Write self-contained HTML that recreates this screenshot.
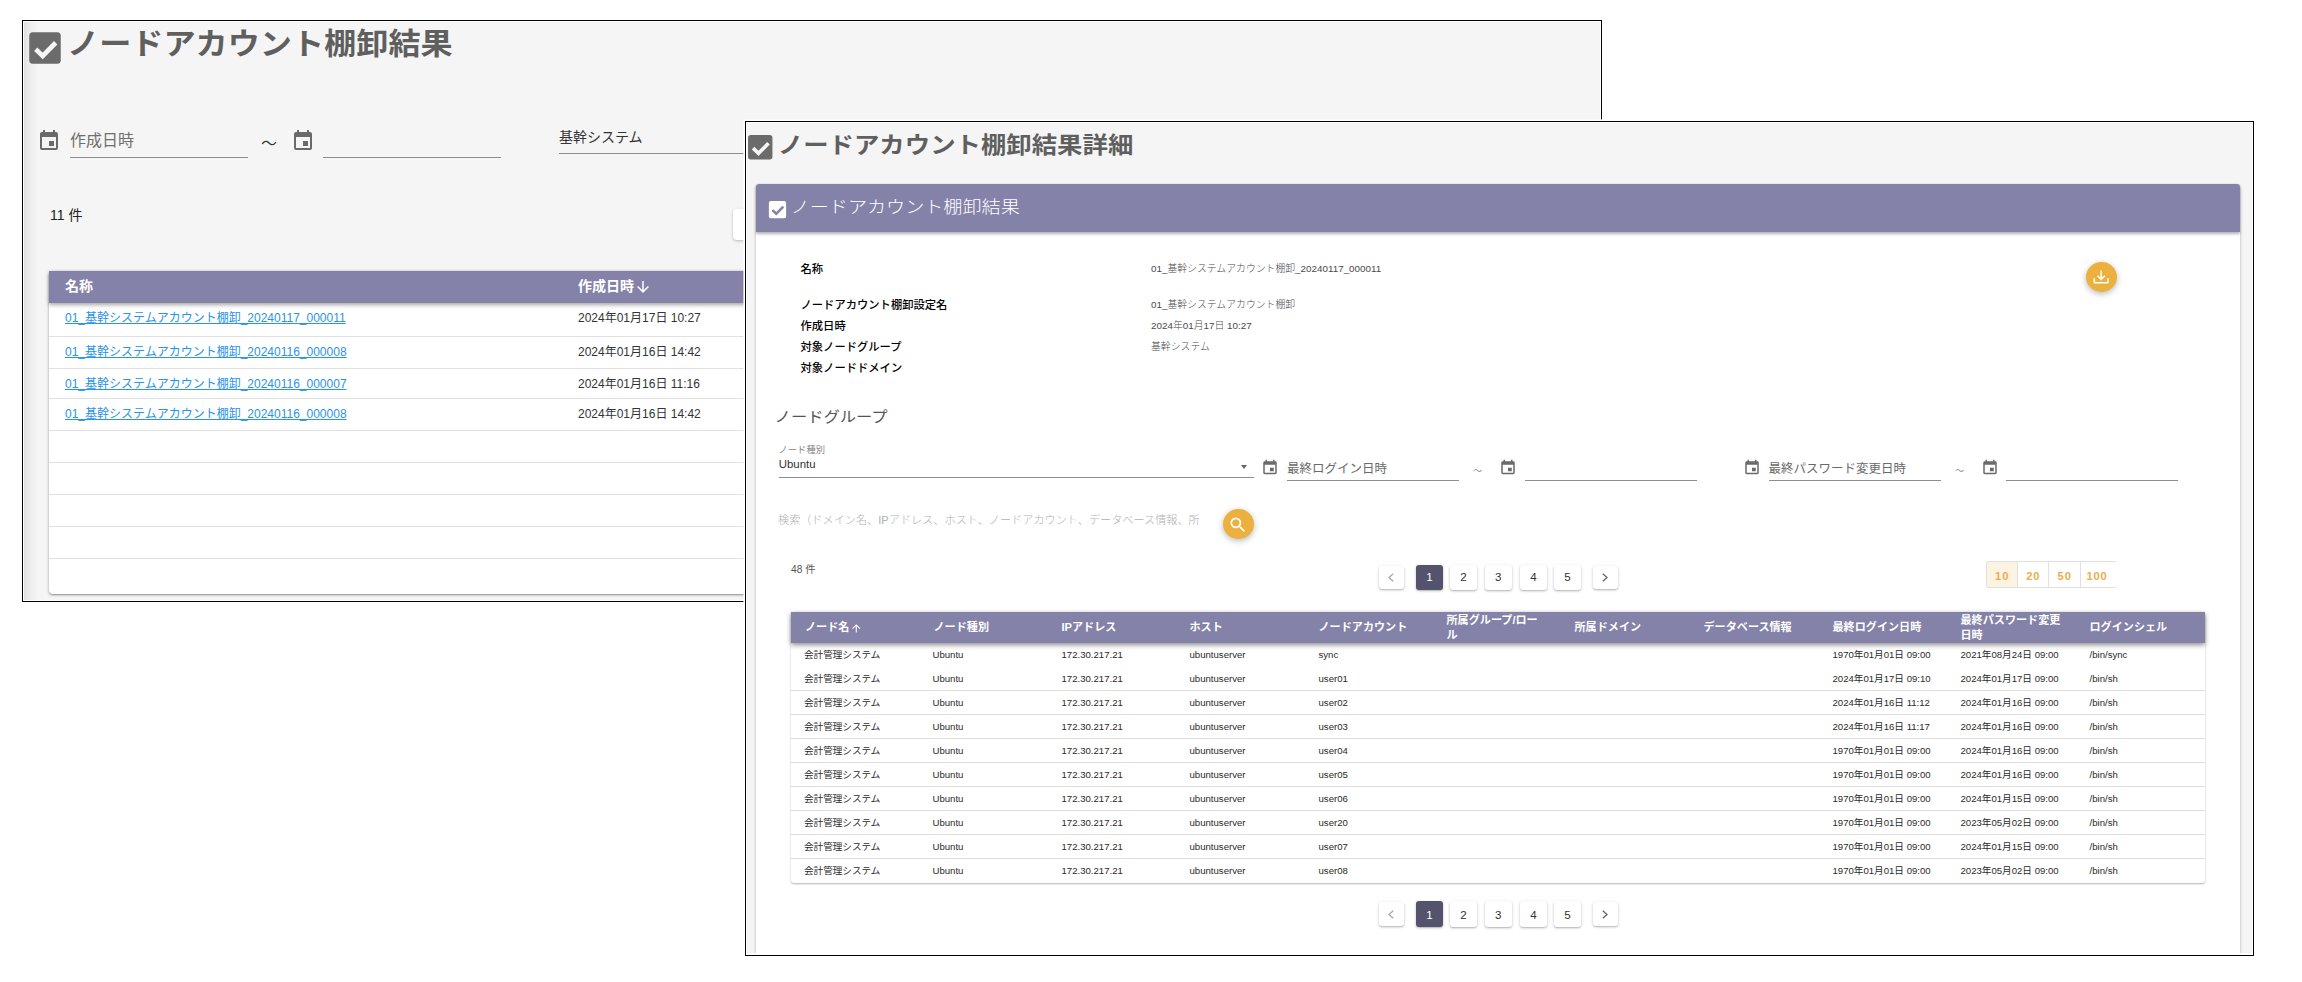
<!DOCTYPE html><html lang="ja"><head><meta charset="utf-8"><title>ノードアカウント棚卸結果</title><style>
*{box-sizing:border-box;margin:0;padding:0}
html,body{width:2302px;height:982px;background:#fff;overflow:hidden}
body{position:relative;font-family:"Liberation Sans","Noto Sans CJK JP",sans-serif;color:#222}
.a{position:absolute}
.t{position:absolute;white-space:nowrap;line-height:20px;height:20px;margin-top:-10px}
.f1{position:absolute;left:22px;top:20px;width:1580px;height:582px;border:1px solid #000;background:#f5f5f5;overflow:hidden;box-shadow:inset 0 0 0 1px #fff}
.f2{position:absolute;left:745px;top:121px;width:1509px;height:835px;border:1px solid #000;background:#f5f5f5;overflow:hidden;box-shadow:0 0 0 1px #fff,0 0 0 2px rgba(255,255,255,.6),inset 0 0 0 1px #fff}
.hd{background:#8482a8}
.ul{position:absolute;height:1px;background:#8e8e8e}
.pg{position:absolute;background:#fff;border-radius:3px;box-shadow:0 1px 3px rgba(0,0,0,.24),0 1px 1px rgba(0,0,0,.1);font-size:11.6px;text-align:center;color:#333}
.pg.on{background:#54536e;color:#fff}
.dv{position:absolute;height:1px;background:#e0e0e0}
</style></head><body>
<div class="f1">
<div class="a" style="left:1px;top:1px;width:16px;height:578px;background:linear-gradient(90deg,#e0e0e0,#e9e9e9 25%,#f0f0f0 55%,#f5f5f5)"></div>
<svg class="a" style="left:0.6px;top:5.5px" width="42" height="42" viewBox="0 0 24 24"><rect x="3" y="3" width="18" height="18" rx="2" fill="#6b6b6b"/><path d="M6.700 12.700l4 3.800 7.400-7.500" fill="none" stroke="#f5f5f5" stroke-width="2.700"/></svg>
<div class="t " style="left:44px;top:23.2px;font-size:32.15px;color:#5f5f5f;font-weight:700;height:50px;line-height:50px;margin-top:-25px;transform:scaleY(.93)">ノードアカウント棚卸結果</div>
<svg class="a" style="left:14px;top:108px" width="24" height="24" viewBox="0 0 24 24"><path fill="#6a6a6a" d="M19 19H5V8h14m-3-7v2H8V1H6v2H5c-1.11 0-2 .89-2 2v14a2 2 0 0 0 2 2h14a2 2 0 0 0 2-2V5a2 2 0 0 0-2-2h-1V1m-1 11h-5v5h5v-5z"/></svg>
<div class="t " style="left:47px;top:120px;font-size:16px;color:#6f6f6f;font-weight:400;">作成日時</div>
<div class="ul" style="left:47px;top:136px;width:178px"></div>
<div class="t " style="left:238px;top:123px;font-size:16px;color:#333;font-weight:400;">～</div>
<svg class="a" style="left:267.5px;top:108px" width="24" height="24" viewBox="0 0 24 24"><path fill="#6a6a6a" d="M19 19H5V8h14m-3-7v2H8V1H6v2H5c-1.11 0-2 .89-2 2v14a2 2 0 0 0 2 2h14a2 2 0 0 0 2-2V5a2 2 0 0 0-2-2h-1V1m-1 11h-5v5h5v-5z"/></svg>
<div class="ul" style="left:300px;top:136px;width:178px"></div>
<div class="t " style="left:536px;top:116px;font-size:14px;color:#333;font-weight:400;">基幹システム</div>
<div class="ul" style="left:536px;top:132px;width:300px"></div>
<div class="t " style="left:27px;top:194px;font-size:14px;color:#222;font-weight:400;">11 件</div>
<div class="a" style="left:710px;top:188px;width:60px;height:31px;background:#fff;border-radius:4px;box-shadow:0 1px 3px rgba(0,0,0,.25)"></div>
<div class="a" style="left:26px;top:250px;width:1500px;height:323px;background:#fff;border-radius:4px;box-shadow:0 1px 3px rgba(0,0,0,.35),0 1px 1px rgba(0,0,0,.14)"></div>
<div class="a hd" style="left:26px;top:250px;width:1500px;height:32px;box-shadow:0 2px 4px rgba(0,0,0,.35)"></div>
<div class="t " style="left:42px;top:265px;font-size:14px;color:#fff;font-weight:700;">名称</div>
<div class="t " style="left:555px;top:265px;font-size:14px;color:#fff;font-weight:700;">作成日時</div>
<svg class="a" style="left:610.6px;top:257px" width="18" height="18" viewBox="0 0 24 24"><path fill="#fff" d="M11 4h2v12l5.500-5.500 1.420 1.420L12 19.840l-7.920-7.920L5.500 10.500 11 16V4z"/></svg>
<div class="t " style="left:42px;top:296.5px;font-size:12px;color:#2a93ea;font-weight:400;"><span style="text-decoration:underline">01_基幹システムアカウント棚卸_20240117_000011</span></div>
<div class="t " style="left:555px;top:296.5px;font-size:12px;color:#333;font-weight:400;">2024年01月17日 10:27</div>
<div class="t " style="left:42px;top:330.7px;font-size:12px;color:#2a93ea;font-weight:400;"><span style="text-decoration:underline">01_基幹システムアカウント棚卸_20240116_000008</span></div>
<div class="t " style="left:555px;top:330.7px;font-size:12px;color:#333;font-weight:400;">2024年01月16日 14:42</div>
<div class="t " style="left:42px;top:362.5px;font-size:12px;color:#2a93ea;font-weight:400;"><span style="text-decoration:underline">01_基幹システムアカウント棚卸_20240116_000007</span></div>
<div class="t " style="left:555px;top:362.5px;font-size:12px;color:#333;font-weight:400;">2024年01月16日 11:16</div>
<div class="t " style="left:42px;top:392.7px;font-size:12px;color:#2a93ea;font-weight:400;"><span style="text-decoration:underline">01_基幹システムアカウント棚卸_20240116_000008</span></div>
<div class="t " style="left:555px;top:392.7px;font-size:12px;color:#333;font-weight:400;">2024年01月16日 14:42</div>
<div class="dv" style="left:26px;top:315px;width:1500px"></div>
<div class="dv" style="left:26px;top:347px;width:1500px"></div>
<div class="dv" style="left:26px;top:377px;width:1500px"></div>
<div class="dv" style="left:26px;top:409px;width:1500px"></div>
<div class="dv" style="left:26px;top:441px;width:1500px"></div>
<div class="dv" style="left:26px;top:473px;width:1500px"></div>
<div class="dv" style="left:26px;top:505px;width:1500px"></div>
<div class="dv" style="left:26px;top:537px;width:1500px"></div>
</div>
<div class="f2">
<svg class="a" style="left:-2.3px;top:8.8px" width="32.5" height="32.5" viewBox="0 0 24 24"><rect x="3" y="3" width="18" height="18" rx="2" fill="#6b6b6b"/><path d="M6.700 12.700l4 3.800 7.400-7.500" fill="none" stroke="#f5f5f5" stroke-width="2.700"/></svg>
<div class="t " style="left:31.8px;top:22.6px;font-size:25.4px;color:#5f5f5f;font-weight:700;height:40px;line-height:40px;margin-top:-20px;transform:scaleY(.9)">ノードアカウント棚卸結果詳細</div>
<div class="a" style="left:10px;top:62px;width:1484px;height:800px;background:#fff;border-radius:3px;box-shadow:0 1px 3px rgba(0,0,0,.3)"></div>
<div class="a hd" style="left:10px;top:62px;width:1484px;height:48px;border-radius:3px 3px 0 0;box-shadow:0 2px 3px rgba(0,0,0,.3)"></div>
<svg class="a" style="left:20px;top:76px" width="23" height="23" viewBox="0 0 24 24"><rect x="3" y="3" width="18" height="18" rx="2" fill="#fff"/><path d="M6.700 12.700l4 3.800 7.400-7.500" fill="none" stroke="#8482a8" stroke-width="2.700"/></svg>
<div class="t " style="left:44.6px;top:85.6px;font-size:19.1px;color:#fff;font-weight:300;height:30px;line-height:30px;margin-top:-15px;transform:scaleY(.88)">ノードアカウント棚卸結果</div>
<div class="t " style="left:54.5px;top:146.5px;font-size:11.3px;color:#000;font-weight:500;">名称</div>
<div class="t " style="left:405px;top:146.8px;font-size:9.85px;color:#4a4a4a;font-weight:300;">01_基幹システムアカウント棚卸_20240117_000011</div>
<div class="t " style="left:54.5px;top:182.5px;font-size:11.3px;color:#000;font-weight:500;">ノードアカウント棚卸設定名</div>
<div class="t " style="left:405px;top:182.8px;font-size:9.85px;color:#4a4a4a;font-weight:300;">01_基幹システムアカウント棚卸</div>
<div class="t " style="left:54.5px;top:203.5px;font-size:11.3px;color:#000;font-weight:500;">作成日時</div>
<div class="t " style="left:405px;top:203.8px;font-size:9.85px;color:#4a4a4a;font-weight:300;">2024年01月17日 10:27</div>
<div class="t " style="left:54.5px;top:224.5px;font-size:11.3px;color:#000;font-weight:500;">対象ノードグループ</div>
<div class="t " style="left:405px;top:224.8px;font-size:9.85px;color:#4a4a4a;font-weight:300;">基幹システム</div>
<div class="t " style="left:54.5px;top:245.5px;font-size:11.3px;color:#000;font-weight:500;">対象ノードドメイン</div>
<div class="a" style="left:1340px;top:140px;width:31px;height:30px;border-radius:50%;background:#ecb03e;box-shadow:0 2px 6px rgba(0,0,0,.28)"></div>
<svg class="a" style="left:1346.4px;top:147px" width="18.4" height="18.4" viewBox="0 0 24 24"><path fill="#fff" d="M2 12h2v5h16v-5h2v5c0 1.11-.89 2-2 2H4a2 2 0 0 1-2-2v-5m10 3l5.55-5.46-1.42-1.41L13 11.25V2h-2v9.25L7.88 8.13 6.46 9.55 12 15z"/></svg>
<div class="t " style="left:28.6px;top:294.8px;font-size:16.3px;color:#555;font-weight:400;transform:scaleY(.9)">ノードグループ</div>
<div class="t " style="left:32.5px;top:328.3px;font-size:9.3px;color:#888;font-weight:400;">ノード種別</div>
<div class="t " style="left:32.8px;top:342px;font-size:11.4px;color:#333;font-weight:400;">Ubuntu</div>
<div class="ul" style="left:33px;top:355px;width:475px"></div>
<div class="a" style="left:494.5px;top:343px;width:0;height:0;border-left:3.5px solid transparent;border-right:3.5px solid transparent;border-top:4px solid #666"></div>
<svg class="a" style="left:514.9px;top:337.4px" width="18" height="17.4" preserveAspectRatio="none" viewBox="0 0 24 24"><path fill="#6a6a6a" d="M19 19H5V8h14m-3-7v2H8V1H6v2H5c-1.11 0-2 .89-2 2v14a2 2 0 0 0 2 2h14a2 2 0 0 0 2-2V5a2 2 0 0 0-2-2h-1V1m-1 11h-5v5h5v-5z"/></svg>
<div class="t " style="left:541px;top:346.5px;font-size:12.5px;color:#6a6a6a;font-weight:400;">最終ログイン日時</div>
<div class="ul" style="left:541px;top:358px;width:172px"></div>
<div class="t " style="left:727px;top:348.5px;font-size:9px;color:#888;font-weight:400;">～</div>
<svg class="a" style="left:752.9px;top:337.4px" width="18" height="17.4" preserveAspectRatio="none" viewBox="0 0 24 24"><path fill="#6a6a6a" d="M19 19H5V8h14m-3-7v2H8V1H6v2H5c-1.11 0-2 .89-2 2v14a2 2 0 0 0 2 2h14a2 2 0 0 0 2-2V5a2 2 0 0 0-2-2h-1V1m-1 11h-5v5h5v-5z"/></svg>
<div class="ul" style="left:778.5px;top:358px;width:172px"></div>
<svg class="a" style="left:996.9px;top:337.4px" width="18" height="17.4" preserveAspectRatio="none" viewBox="0 0 24 24"><path fill="#6a6a6a" d="M19 19H5V8h14m-3-7v2H8V1H6v2H5c-1.11 0-2 .89-2 2v14a2 2 0 0 0 2 2h14a2 2 0 0 0 2-2V5a2 2 0 0 0-2-2h-1V1m-1 11h-5v5h5v-5z"/></svg>
<div class="t " style="left:1022.5px;top:346.5px;font-size:12.5px;color:#6a6a6a;font-weight:400;">最終パスワード変更日時</div>
<div class="ul" style="left:1022.5px;top:358px;width:172px"></div>
<div class="t " style="left:1209px;top:348.5px;font-size:9px;color:#888;font-weight:400;">～</div>
<svg class="a" style="left:1234.9px;top:337.4px" width="18" height="17.4" preserveAspectRatio="none" viewBox="0 0 24 24"><path fill="#6a6a6a" d="M19 19H5V8h14m-3-7v2H8V1H6v2H5c-1.11 0-2 .89-2 2v14a2 2 0 0 0 2 2h14a2 2 0 0 0 2-2V5a2 2 0 0 0-2-2h-1V1m-1 11h-5v5h5v-5z"/></svg>
<div class="ul" style="left:1260px;top:358px;width:172px"></div>
<div class="t " style="left:32px;top:397.5px;font-size:11.15px;color:#b0b0b0;font-weight:300;">検索（ドメイン名、IPアドレス、ホスト、ノードアカウント、データベース情報、所</div>
<div class="a" style="left:477px;top:387px;width:31px;height:30px;border-radius:50%;background:#ecb03e;box-shadow:0 2px 6px rgba(0,0,0,.28)"></div>
<svg class="a" style="left:482.1px;top:392.5px" width="19.900" height="19.900" viewBox="0 0 24 24"><path fill="#fff" d="M9.5 3A6.5 6.5 0 0 1 16 9.500c0 1.61-.59 3.090-1.560 4.230l.27.27h.79l5 5-1.500 1.500-5-5v-.790l-.27-.27A6.516 6.516 0 0 1 9.500 16 6.500 6.500 0 0 1 3 9.500 6.500 6.500 0 0 1 9.500 3m0 2C7 5 5 7 5 9.500S7 14 9.500 14 14 12 14 9.500 12 5 9.500 5z"/></svg>
<div class="t " style="left:45px;top:447.5px;font-size:10.2px;color:#555;font-weight:400;">48 件</div>
<div class="pg" style="left:633px;top:444px;width:25px;height:23px"><svg class="a" style="left:9.3px;top:7.2px" width="6" height="9" viewBox="0 0 6 9"><path d="M5.200 .700L1 4.500l4.200 3.800" fill="none" stroke="#a8a8a8" stroke-width="1.300"/></svg></div>
<div class="pg on" style="left:670px;top:443px;width:26.8px;height:24.6px;line-height:24.6px">1</div>
<div class="pg" style="left:704px;top:443px;width:26.8px;height:24.6px;line-height:24.6px">2</div>
<div class="pg" style="left:738.8px;top:443px;width:26.8px;height:24.6px;line-height:24.6px">3</div>
<div class="pg" style="left:774px;top:443px;width:26.8px;height:24.6px;line-height:24.6px">4</div>
<div class="pg" style="left:808.2px;top:443px;width:26.8px;height:24.6px;line-height:24.6px">5</div>
<div class="pg" style="left:847px;top:444px;width:25px;height:23px"><svg class="a" style="left:9.3px;top:7.2px" width="6" height="9" viewBox="0 0 6 9"><path d="M.800 .700L5 4.500.800 8.300" fill="none" stroke="#666" stroke-width="1.300"/></svg></div>
<div class="pg" style="left:633px;top:780px;width:25px;height:24px"><svg class="a" style="left:9.3px;top:7.7px" width="6" height="9" viewBox="0 0 6 9"><path d="M5.200 .700L1 4.500l4.200 3.800" fill="none" stroke="#a8a8a8" stroke-width="1.300"/></svg></div>
<div class="pg on" style="left:670px;top:778.8px;width:26.8px;height:26px;line-height:28px">1</div>
<div class="pg" style="left:704px;top:778.8px;width:26.8px;height:26px;line-height:28px">2</div>
<div class="pg" style="left:738.8px;top:778.8px;width:26.8px;height:26px;line-height:28px">3</div>
<div class="pg" style="left:774px;top:778.8px;width:26.8px;height:26px;line-height:28px">4</div>
<div class="pg" style="left:808.2px;top:778.8px;width:26.8px;height:26px;line-height:28px">5</div>
<div class="pg" style="left:847px;top:780px;width:25px;height:24px"><svg class="a" style="left:9.3px;top:7.7px" width="6" height="9" viewBox="0 0 6 9"><path d="M.800 .700L5 4.500.800 8.300" fill="none" stroke="#666" stroke-width="1.300"/></svg></div>
<div class="a" style="left:1240px;top:439px;width:131px;height:27px;border:1px solid #e0e0e0;border-right:none;border-radius:3px;overflow:hidden;display:flex;font-size:11.2px;font-weight:700;color:#ebad4c;letter-spacing:.9px;line-height:28px;text-align:center"><div style="width:30.5px;background:#fdf3e3">10</div><div style="width:31px;border-left:1px solid #e0e0e0">20</div><div style="width:32px;border-left:1px solid #e0e0e0">50</div><div style="width:37px;border-left:1px solid #e0e0e0;padding-right:4px">100</div></div>
<div class="a" style="left:45px;top:490px;width:1414px;height:271px;background:#fff;border-radius:3px;box-shadow:0 1px 2px rgba(0,0,0,.3)"></div>
<div class="a hd" style="left:45px;top:490px;width:1414px;height:31px;box-shadow:0 2px 5px rgba(0,0,0,.45)"></div>
<div class="t " style="left:59px;top:505px;font-size:11.1px;color:#fff;font-weight:700;">ノード名</div>
<div class="t " style="left:187.5px;top:505px;font-size:11.1px;color:#fff;font-weight:700;">ノード種別</div>
<div class="t " style="left:315.5px;top:505px;font-size:11.1px;color:#fff;font-weight:700;">IPアドレス</div>
<div class="t " style="left:443.5px;top:505px;font-size:11.1px;color:#fff;font-weight:700;">ホスト</div>
<div class="t " style="left:572.5px;top:505px;font-size:11.1px;color:#fff;font-weight:700;">ノードアカウント</div>
<div class="t " style="left:828.5px;top:505px;font-size:11.1px;color:#fff;font-weight:700;">所属ドメイン</div>
<div class="t " style="left:957.5px;top:505px;font-size:11.1px;color:#fff;font-weight:700;">データベース情報</div>
<div class="t " style="left:1086.5px;top:505px;font-size:11.1px;color:#fff;font-weight:700;">最終ログイン日時</div>
<div class="t " style="left:1343.5px;top:505px;font-size:11.1px;color:#fff;font-weight:700;">ログインシェル</div>
<svg class="a" style="left:103.7px;top:499.7px" width="12.5" height="12.5" viewBox="0 0 24 24"><path fill="#fff" d="M13 20h-2V8l-5.500 5.500-1.420-1.420L12 4.160l7.920 7.920-1.420 1.420L13 8v12z"/></svg>
<div class="a" style="left:700.5px;top:490px;width:100px;height:31px;font-size:11.1px;font-weight:700;color:#fff;line-height:15.2px;padding-top:1px">所属グループ/ロー<br>ル</div>
<div class="a" style="left:1214.5px;top:490px;width:110px;height:31px;font-size:11.1px;font-weight:700;color:#fff;line-height:15.2px;padding-top:1px">最終パスワード変更<br>日時</div>
<div class="t " style="left:58px;top:533px;font-size:9.6px;color:#2a2a2a;font-weight:400;">会計管理システム</div>
<div class="t " style="left:186.5px;top:533px;font-size:9.6px;color:#2a2a2a;font-weight:400;">Ubuntu</div>
<div class="t " style="left:315.5px;top:533px;font-size:9.6px;color:#2a2a2a;font-weight:400;">172.30.217.21</div>
<div class="t " style="left:443.5px;top:533px;font-size:9.6px;color:#2a2a2a;font-weight:400;">ubuntuserver</div>
<div class="t " style="left:572.5px;top:533px;font-size:9.6px;color:#2a2a2a;font-weight:400;">sync</div>
<div class="t " style="left:1086.5px;top:533px;font-size:9.6px;color:#2a2a2a;font-weight:400;">1970年01月01日 09:00</div>
<div class="t " style="left:1214.5px;top:533px;font-size:9.6px;color:#2a2a2a;font-weight:400;">2021年08月24日 09:00</div>
<div class="t " style="left:1343.5px;top:533px;font-size:9.6px;color:#2a2a2a;font-weight:400;">/bin/sync</div>
<div class="t " style="left:58px;top:557px;font-size:9.6px;color:#2a2a2a;font-weight:400;">会計管理システム</div>
<div class="t " style="left:186.5px;top:557px;font-size:9.6px;color:#2a2a2a;font-weight:400;">Ubuntu</div>
<div class="t " style="left:315.5px;top:557px;font-size:9.6px;color:#2a2a2a;font-weight:400;">172.30.217.21</div>
<div class="t " style="left:443.5px;top:557px;font-size:9.6px;color:#2a2a2a;font-weight:400;">ubuntuserver</div>
<div class="t " style="left:572.5px;top:557px;font-size:9.6px;color:#2a2a2a;font-weight:400;">user01</div>
<div class="t " style="left:1086.5px;top:557px;font-size:9.6px;color:#2a2a2a;font-weight:400;">2024年01月17日 09:10</div>
<div class="t " style="left:1214.5px;top:557px;font-size:9.6px;color:#2a2a2a;font-weight:400;">2024年01月17日 09:00</div>
<div class="t " style="left:1343.5px;top:557px;font-size:9.6px;color:#2a2a2a;font-weight:400;">/bin/sh</div>
<div class="t " style="left:58px;top:581px;font-size:9.6px;color:#2a2a2a;font-weight:400;">会計管理システム</div>
<div class="t " style="left:186.5px;top:581px;font-size:9.6px;color:#2a2a2a;font-weight:400;">Ubuntu</div>
<div class="t " style="left:315.5px;top:581px;font-size:9.6px;color:#2a2a2a;font-weight:400;">172.30.217.21</div>
<div class="t " style="left:443.5px;top:581px;font-size:9.6px;color:#2a2a2a;font-weight:400;">ubuntuserver</div>
<div class="t " style="left:572.5px;top:581px;font-size:9.6px;color:#2a2a2a;font-weight:400;">user02</div>
<div class="t " style="left:1086.5px;top:581px;font-size:9.6px;color:#2a2a2a;font-weight:400;">2024年01月16日 11:12</div>
<div class="t " style="left:1214.5px;top:581px;font-size:9.6px;color:#2a2a2a;font-weight:400;">2024年01月16日 09:00</div>
<div class="t " style="left:1343.5px;top:581px;font-size:9.6px;color:#2a2a2a;font-weight:400;">/bin/sh</div>
<div class="t " style="left:58px;top:605px;font-size:9.6px;color:#2a2a2a;font-weight:400;">会計管理システム</div>
<div class="t " style="left:186.5px;top:605px;font-size:9.6px;color:#2a2a2a;font-weight:400;">Ubuntu</div>
<div class="t " style="left:315.5px;top:605px;font-size:9.6px;color:#2a2a2a;font-weight:400;">172.30.217.21</div>
<div class="t " style="left:443.5px;top:605px;font-size:9.6px;color:#2a2a2a;font-weight:400;">ubuntuserver</div>
<div class="t " style="left:572.5px;top:605px;font-size:9.6px;color:#2a2a2a;font-weight:400;">user03</div>
<div class="t " style="left:1086.5px;top:605px;font-size:9.6px;color:#2a2a2a;font-weight:400;">2024年01月16日 11:17</div>
<div class="t " style="left:1214.5px;top:605px;font-size:9.6px;color:#2a2a2a;font-weight:400;">2024年01月16日 09:00</div>
<div class="t " style="left:1343.5px;top:605px;font-size:9.6px;color:#2a2a2a;font-weight:400;">/bin/sh</div>
<div class="t " style="left:58px;top:628.5px;font-size:9.6px;color:#2a2a2a;font-weight:400;">会計管理システム</div>
<div class="t " style="left:186.5px;top:628.5px;font-size:9.6px;color:#2a2a2a;font-weight:400;">Ubuntu</div>
<div class="t " style="left:315.5px;top:628.5px;font-size:9.6px;color:#2a2a2a;font-weight:400;">172.30.217.21</div>
<div class="t " style="left:443.5px;top:628.5px;font-size:9.6px;color:#2a2a2a;font-weight:400;">ubuntuserver</div>
<div class="t " style="left:572.5px;top:628.5px;font-size:9.6px;color:#2a2a2a;font-weight:400;">user04</div>
<div class="t " style="left:1086.5px;top:628.5px;font-size:9.6px;color:#2a2a2a;font-weight:400;">1970年01月01日 09:00</div>
<div class="t " style="left:1214.5px;top:628.5px;font-size:9.6px;color:#2a2a2a;font-weight:400;">2024年01月16日 09:00</div>
<div class="t " style="left:1343.5px;top:628.5px;font-size:9.6px;color:#2a2a2a;font-weight:400;">/bin/sh</div>
<div class="t " style="left:58px;top:652.5px;font-size:9.6px;color:#2a2a2a;font-weight:400;">会計管理システム</div>
<div class="t " style="left:186.5px;top:652.5px;font-size:9.6px;color:#2a2a2a;font-weight:400;">Ubuntu</div>
<div class="t " style="left:315.5px;top:652.5px;font-size:9.6px;color:#2a2a2a;font-weight:400;">172.30.217.21</div>
<div class="t " style="left:443.5px;top:652.5px;font-size:9.6px;color:#2a2a2a;font-weight:400;">ubuntuserver</div>
<div class="t " style="left:572.5px;top:652.5px;font-size:9.6px;color:#2a2a2a;font-weight:400;">user05</div>
<div class="t " style="left:1086.5px;top:652.5px;font-size:9.6px;color:#2a2a2a;font-weight:400;">1970年01月01日 09:00</div>
<div class="t " style="left:1214.5px;top:652.5px;font-size:9.6px;color:#2a2a2a;font-weight:400;">2024年01月16日 09:00</div>
<div class="t " style="left:1343.5px;top:652.5px;font-size:9.6px;color:#2a2a2a;font-weight:400;">/bin/sh</div>
<div class="t " style="left:58px;top:676.5px;font-size:9.6px;color:#2a2a2a;font-weight:400;">会計管理システム</div>
<div class="t " style="left:186.5px;top:676.5px;font-size:9.6px;color:#2a2a2a;font-weight:400;">Ubuntu</div>
<div class="t " style="left:315.5px;top:676.5px;font-size:9.6px;color:#2a2a2a;font-weight:400;">172.30.217.21</div>
<div class="t " style="left:443.5px;top:676.5px;font-size:9.6px;color:#2a2a2a;font-weight:400;">ubuntuserver</div>
<div class="t " style="left:572.5px;top:676.5px;font-size:9.6px;color:#2a2a2a;font-weight:400;">user06</div>
<div class="t " style="left:1086.5px;top:676.5px;font-size:9.6px;color:#2a2a2a;font-weight:400;">1970年01月01日 09:00</div>
<div class="t " style="left:1214.5px;top:676.5px;font-size:9.6px;color:#2a2a2a;font-weight:400;">2024年01月15日 09:00</div>
<div class="t " style="left:1343.5px;top:676.5px;font-size:9.6px;color:#2a2a2a;font-weight:400;">/bin/sh</div>
<div class="t " style="left:58px;top:700.5px;font-size:9.6px;color:#2a2a2a;font-weight:400;">会計管理システム</div>
<div class="t " style="left:186.5px;top:700.5px;font-size:9.6px;color:#2a2a2a;font-weight:400;">Ubuntu</div>
<div class="t " style="left:315.5px;top:700.5px;font-size:9.6px;color:#2a2a2a;font-weight:400;">172.30.217.21</div>
<div class="t " style="left:443.5px;top:700.5px;font-size:9.6px;color:#2a2a2a;font-weight:400;">ubuntuserver</div>
<div class="t " style="left:572.5px;top:700.5px;font-size:9.6px;color:#2a2a2a;font-weight:400;">user20</div>
<div class="t " style="left:1086.5px;top:700.5px;font-size:9.6px;color:#2a2a2a;font-weight:400;">1970年01月01日 09:00</div>
<div class="t " style="left:1214.5px;top:700.5px;font-size:9.6px;color:#2a2a2a;font-weight:400;">2023年05月02日 09:00</div>
<div class="t " style="left:1343.5px;top:700.5px;font-size:9.6px;color:#2a2a2a;font-weight:400;">/bin/sh</div>
<div class="t " style="left:58px;top:724.5px;font-size:9.6px;color:#2a2a2a;font-weight:400;">会計管理システム</div>
<div class="t " style="left:186.5px;top:724.5px;font-size:9.6px;color:#2a2a2a;font-weight:400;">Ubuntu</div>
<div class="t " style="left:315.5px;top:724.5px;font-size:9.6px;color:#2a2a2a;font-weight:400;">172.30.217.21</div>
<div class="t " style="left:443.5px;top:724.5px;font-size:9.6px;color:#2a2a2a;font-weight:400;">ubuntuserver</div>
<div class="t " style="left:572.5px;top:724.5px;font-size:9.6px;color:#2a2a2a;font-weight:400;">user07</div>
<div class="t " style="left:1086.5px;top:724.5px;font-size:9.6px;color:#2a2a2a;font-weight:400;">1970年01月01日 09:00</div>
<div class="t " style="left:1214.5px;top:724.5px;font-size:9.6px;color:#2a2a2a;font-weight:400;">2024年01月15日 09:00</div>
<div class="t " style="left:1343.5px;top:724.5px;font-size:9.6px;color:#2a2a2a;font-weight:400;">/bin/sh</div>
<div class="t " style="left:58px;top:748.5px;font-size:9.6px;color:#2a2a2a;font-weight:400;">会計管理システム</div>
<div class="t " style="left:186.5px;top:748.5px;font-size:9.6px;color:#2a2a2a;font-weight:400;">Ubuntu</div>
<div class="t " style="left:315.5px;top:748.5px;font-size:9.6px;color:#2a2a2a;font-weight:400;">172.30.217.21</div>
<div class="t " style="left:443.5px;top:748.5px;font-size:9.6px;color:#2a2a2a;font-weight:400;">ubuntuserver</div>
<div class="t " style="left:572.5px;top:748.5px;font-size:9.6px;color:#2a2a2a;font-weight:400;">user08</div>
<div class="t " style="left:1086.5px;top:748.5px;font-size:9.6px;color:#2a2a2a;font-weight:400;">1970年01月01日 09:00</div>
<div class="t " style="left:1214.5px;top:748.5px;font-size:9.6px;color:#2a2a2a;font-weight:400;">2023年05月02日 09:00</div>
<div class="t " style="left:1343.5px;top:748.5px;font-size:9.6px;color:#2a2a2a;font-weight:400;">/bin/sh</div>
<div class="dv" style="left:45px;top:568px;width:1414px"></div>
<div class="dv" style="left:45px;top:592px;width:1414px"></div>
<div class="dv" style="left:45px;top:616px;width:1414px"></div>
<div class="dv" style="left:45px;top:640px;width:1414px"></div>
<div class="dv" style="left:45px;top:664px;width:1414px"></div>
<div class="dv" style="left:45px;top:688px;width:1414px"></div>
<div class="dv" style="left:45px;top:712px;width:1414px"></div>
<div class="dv" style="left:45px;top:736px;width:1414px"></div>
<div class="a" style="left:0;bottom:0;width:1507px;height:2px;background:#fff"></div>
</div>
</body></html>
